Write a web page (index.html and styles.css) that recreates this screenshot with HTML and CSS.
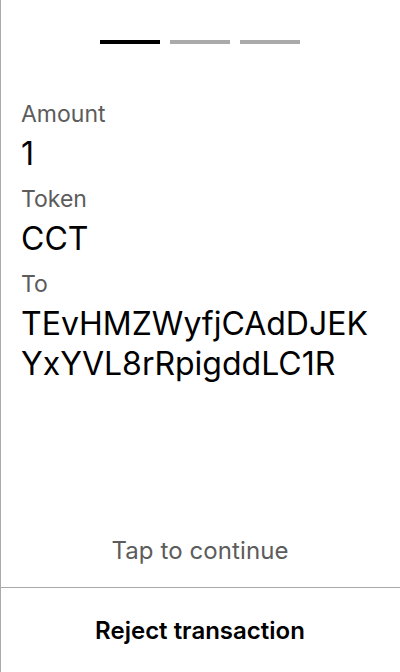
FILE: index.html
```html
<!DOCTYPE html>
<html>
<head>
<meta charset="utf-8">
<link rel="stylesheet" href="styles.css">
</head>
<body>
<div class="screen">
  <div class="steps">
    <span class="step active"></span>
    <span class="step"></span>
    <span class="step"></span>
  </div>
  <div class="details">
    <div class="label">Amount</div>
    <div class="value">1</div>
    <div class="label">Token</div>
    <div class="value">CCT</div>
    <div class="label">To</div>
    <div class="value address">TEvHMZWyfjCAdDJEK<br>YxYVL8rRpigddLC1R</div>
  </div>
  <div class="tap">Tap to continue</div>
  <div class="reject">Reject transaction</div>
</div>
</body>
</html>
```
FILE: styles.css
```css
html, body {
  margin: 0;
  padding: 0;
  background: #fff;
}
.screen {
  width: 400px;
  height: 672px;
  box-sizing: border-box;
  border-left: 1px solid #aaaaaa;
  display: flex;
  flex-direction: column;
  font-family: Inter, "Noto Sans", sans-serif;
  color: #000;
}
.steps {
  display: flex;
  justify-content: center;
  gap: 10px;
  padding-top: 40px;
  margin-left: -1px;
}
.step {
  width: 60px;
  height: 4px;
  background: #aaaaaa;
}
.step.active {
  background: #000;
}
.details {
  padding: 56px 0 0 20px;
  flex: 1;
}
.label {
  font-size: 23px;
  line-height: 28px;
  color: #5c5c5c;
}
.value {
  font-size: 32px;
  line-height: 42px;
  margin-top: 5px;
  margin-bottom: 10px;
}
.value.address {
  line-height: 40px;
  margin-top: 6px;
}
.tap {
  text-align: center;
  font-size: 24px;
  letter-spacing: 0.1px;
  line-height: 30px;
  color: #5c5c5c;
  padding-bottom: 21px;
  margin-left: -1px;
}
.reject {
  border-top: 1px solid #aaaaaa;
  height: 84px;
  display: flex;
  align-items: center;
  justify-content: center;
  font-size: 24px;
  font-weight: 600;
  margin-left: -1px;
}
```
